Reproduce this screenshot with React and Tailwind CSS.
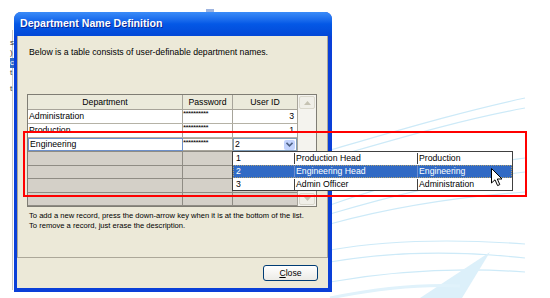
import React from "react";

const ROWS = [
  { dept: "Administration", pw: "**********", id: "3" },
  { dept: "Production", pw: "**********", id: "1" },
];

const LIST = [
  { id: "1", title: "Production Head", dept: "Production" },
  { id: "2", title: "Engineering Head", dept: "Engineering", active: true },
  { id: "3", title: "Admin Officer", dept: "Administration" },
];

function Swooshes() {
  return (
    <svg className="absolute inset-0" width="550" height="298" viewBox="0 0 550 298">
      <g fill="none" stroke="#cdeaf8" strokeWidth="1.2">
        <path d="M330 150 C 400 130, 460 112, 525 98" />
        <path d="M330 158 C 400 138, 460 120, 525 108" />
        <path d="M330 205 C 400 180, 470 165, 525 158" />
        <path d="M330 214 C 410 190, 470 178, 525 172" />
        <path d="M330 224 C 400 205, 470 196, 525 192" />
        <path d="M330 250 C 400 238, 470 240, 525 244" />
        <path d="M330 262 C 400 250, 470 252, 525 258" />
        <path d="M330 282 C 400 270, 470 268, 525 272" />
      </g>
      <path d="M420 298 L 490 252 L 462 298 Z" fill="#dcf0fa" />
      <path d="M330 298 C 380 288, 420 284, 460 286" fill="none" stroke="#e0f2fb" strokeWidth="3" />
    </svg>
  );
}

function Cursor() {
  return (
    <svg className="absolute left-[491px] top-[168px]" width="12" height="19" viewBox="0 0 12 19">
      <path
        d="M0.5 0.5 L0.5 15 L4 11.8 L6.6 17.6 L8.8 16.6 L6.3 11 L11 11 Z"
        fill="#fff"
        stroke="#000"
        strokeWidth="1"
        strokeLinejoin="round"
      />
    </svg>
  );
}

function Chevron({ color = "#4d6185" }) {
  return (
    <svg width="7" height="5" viewBox="0 0 7 5">
      <path d="M0.5 0.8 L3.5 3.8 L6.5 0.8" fill="none" stroke={color} strokeWidth="1.6" />
    </svg>
  );
}

function Arrow({ up }) {
  return (
    <svg width="7" height="4" viewBox="0 0 7 4">
      <path d={up ? "M0 4 L3.5 0 L7 4 Z" : "M0 0 L3.5 4 L7 0 Z"} fill="#c5c2b2" />
    </svg>
  );
}

function DataRow({ dept, pw, id }) {
  return (
    <div className="flex h-[14px] border-b border-[#b5b2a6] bg-white">
      <div className="w-[155px] border-r border-[#a7a49a] pl-[1px] text-[8.7px] leading-[13px]">{dept}</div>
      <div className="w-[50px] border-r border-[#a7a49a] text-[8px] leading-[7px] tracking-[-0.6px]">{pw}</div>
      <div className="flex-1 pr-[3px] text-right text-[8.7px] leading-[13px]">{id}</div>
    </div>
  );
}

function EmptyRow() {
  return (
    <div className="flex h-[14px] border-b border-[#8f8c84] bg-[#d4d0c8]">
      <div className="w-[155px] border-r border-[#8f8c84]" />
      <div className="w-[50px] border-r border-[#8f8c84]" />
      <div className="flex-1" />
    </div>
  );
}

export default function App() {
  return (
    <div className="relative h-[298px] w-[550px] overflow-hidden bg-white font-['Liberation_Sans',Arial,sans-serif] text-black">
      <Swooshes />

      {/* remnants of the window behind */}
      <div className="absolute left-[12px] top-[30px] h-[260px] w-px bg-[#c8c8c8]" />
      <div className="absolute left-[10px] top-[38px] text-[8px] leading-[10px] text-[#333]">
        <div>s</div>
        <div>)</div>
        <div className="bg-[#316ac5] text-white">c</div>
        <div>t</div>
        <div className="mt-[6px]">t</div>
      </div>
      <div className="absolute left-[206px] top-[9px] h-[4px] w-[8px] bg-[#9db4e0]" />

      {/* dialog */}
      <div className="relative ml-[14px] mt-[12px] flex h-[280px] w-[318px] flex-col rounded-t-[7px] bg-[#0a3fd8]">
        <div className="flex h-[24px] items-center rounded-t-[7px] bg-gradient-to-b from-[#3b8cf8] via-[#0458e6] to-[#0348d7] pl-[6px]">
          <span className="text-[10.6px] font-bold text-white [text-shadow:1px_1px_0_#0a2a9a]">
            Department Name Definition
          </span>
        </div>

        <div className="mb-[4px] ml-[3px] mr-[4px] flex flex-1 flex-col bg-[#ece9d8]">
          <div className="h-[222px] border-x border-b border-[#aca899]">
            <p className="pl-[11px] pt-[11px] text-[8.7px] leading-[10px]">
              Below is a table consists of user-definable department names.
            </p>

            <div className="ml-[9px] mt-[37px] flex h-[113px] w-[290px] border border-[#7f7d74]">
              <div className="flex w-[269px] flex-col">
                <div className="flex h-[15px] border-b border-[#a7a49a] bg-[#ebeadb] text-[8.7px] leading-[14px]">
                  <div className="w-[155px] border-r border-[#a7a49a] text-center">Department</div>
                  <div className="w-[50px] border-r border-[#a7a49a] text-center">Password</div>
                  <div className="flex-1 text-center">User ID</div>
                </div>
                {ROWS.map((r) => (
                  <DataRow key={r.dept} {...r} />
                ))}
                <div className="flex h-[14px] border-b border-[#8f8c84] bg-white">
                  <div className="w-[155px] border border-[#6d8fc9] pl-[1px] text-[8.7px] leading-[11px]">Engineering</div>
                  <div className="w-[50px] border-y border-r border-[#a7a49a] text-[8px] leading-[7px] tracking-[-0.6px]">**********</div>
                  <div className="flex flex-1 items-center border border-[#7f9db9] bg-white">
                    <span className="flex-1 pl-[1px] text-[8.7px] leading-[11px]">2</span>
                    <div className="mr-[1px] flex h-[10px] w-[11px] items-center justify-center rounded-[2px] bg-[#c3d3fd]">
                      <Chevron />
                    </div>
                  </div>
                </div>
                <EmptyRow />
                <EmptyRow />
                <EmptyRow />
                <EmptyRow />
              </div>
              <div className="flex w-[19px] flex-col border-l border-[#a7a49a] bg-[#f4f3ee]">
                <div className="m-[1px] flex h-[13px] items-center justify-center rounded-[2px] border border-[#dad8cc] bg-[#f0efe8]">
                  <Arrow up />
                </div>
                <div className="flex-1" />
                <div className="m-[1px] flex h-[12px] items-center justify-center rounded-[2px] border border-[#dad8cc] bg-[#f0efe8]">
                  <Arrow />
                </div>
              </div>
            </div>

            <div className="pl-[11px] pt-[4px] text-[7.6px] leading-[10px]">
              <p>To add a new record, press the down-arrow key when it is at the bottom of the list.</p>
              <p>To remove a record, just erase the description.</p>
            </div>
          </div>

          <div className="mr-[10px] mt-[7px] flex justify-end">
            <button className="h-[16px] w-[55px] rounded-[3px] border border-[#003c74] bg-gradient-to-b from-white to-[#ecebe6] text-[8.7px] leading-[14px]">
              <span className="underline">C</span>lose
            </button>
          </div>
        </div>
      </div>

      {/* dropdown list popup */}
      <div className="absolute left-[232px] top-[151px] h-[40px] w-[281px] border border-[#404040] bg-white text-[8.7px] leading-[13px]">
        {LIST.map((it) => (
          <div
            key={it.id}
            className={
              it.active
                ? "flex h-[13px] border border-dotted border-[#b0a070] bg-[#316ac5] text-white"
                : "flex h-[13px] border border-transparent"
            }
          >
            <div className="w-[60px] pl-[2px] leading-[11px]">{it.id}</div>
            <div className={it.active ? "w-[123px] border-l border-[#6f8fcf] pl-[1px] leading-[11px]" : "w-[123px] border-l border-[#404040] pl-[1px] leading-[11px]"}>
              {it.title}
            </div>
            <div className={it.active ? "flex-1 border-l border-[#6f8fcf] pl-[1px] leading-[11px]" : "flex-1 border-l border-[#404040] pl-[1px] leading-[11px]"}>
              {it.dept}
            </div>
          </div>
        ))}
      </div>

      {/* red highlight frame */}
      <div className="absolute left-[23px] top-[131px] h-[66px] w-[504px] border-2 border-[#ff0000]" />

      <Cursor />
    </div>
  );
}
